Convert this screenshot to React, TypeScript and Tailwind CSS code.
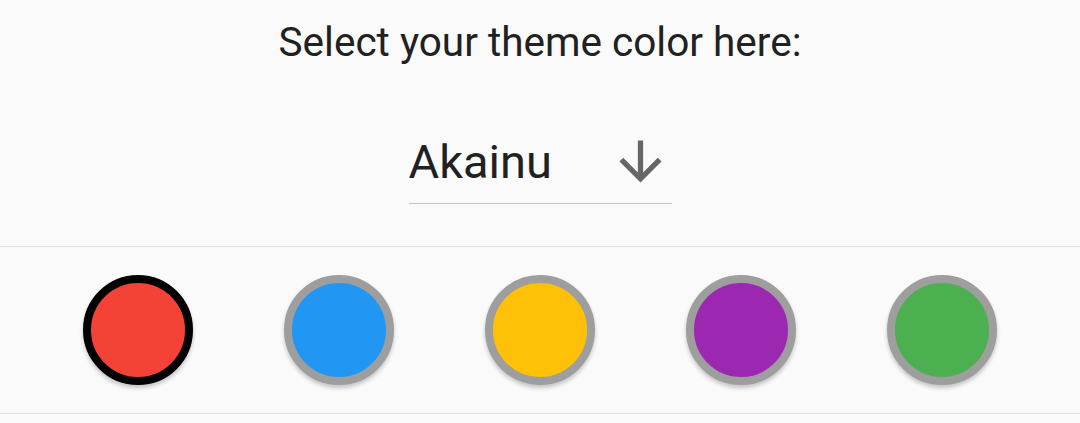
import * as React from 'react';

const swatches = [
  { name: 'Akainu', color: 'bg-[#f44336]' },
  { name: 'Aokiji', color: 'bg-[#2196f3]' },
  { name: 'Kizaru', color: 'bg-[#ffc107]' },
  { name: 'Fujitora', color: 'bg-[#9c27b0]' },
  { name: 'Ryokugyu', color: 'bg-[#4caf50]' },
];

function ArrowDown() {
  return (
    <svg viewBox="0 0 24 24" className="size-[63px] fill-[#666666]" aria-hidden="true">
      <path d="M20 12l-1.41-1.41L13 16.17V4h-2v12.17l-5.58-5.59L4 12l8 8 8-8z" />
    </svg>
  );
}

export default function App() {
  const [selected, setSelected] = React.useState(0);

  return (
    <div className="min-h-[423px] w-full bg-[#fafafa] font-['Roboto',sans-serif] text-[#212121]">
      {/* Title */}
      <div className="flex justify-center pt-[22px]">
        <p className="text-[40.5px] leading-[40px]">Select your theme color here:</p>
      </div>

      {/* Dropdown */}
      <div className="flex justify-center pt-[68px]">
        <button
          type="button"
          className="flex w-[263px] items-center justify-between border-b border-[#c4c4c4] pb-[10px]"
        >
          <span className="text-[47px] leading-[48px]">{swatches[selected].name}</span>
          <ArrowDown />
        </button>
      </div>

      {/* Swatches */}
      <div className="mt-[42px] flex h-[168px] items-center justify-center gap-[91px] border-y border-[#e0e0e0]">
        {swatches.map((s, i) => (
          <button
            key={s.name}
            type="button"
            onClick={() => setSelected(i)}
            className={`size-[110px] rounded-full border-[8px] shadow-[0_3px_4px_rgba(0,0,0,0.22)] ${s.color} ${
              i === selected ? 'border-black' : 'border-[#9e9e9e]'
            }`}
            aria-label={s.name}
          />
        ))}
      </div>
    </div>
  );
}
